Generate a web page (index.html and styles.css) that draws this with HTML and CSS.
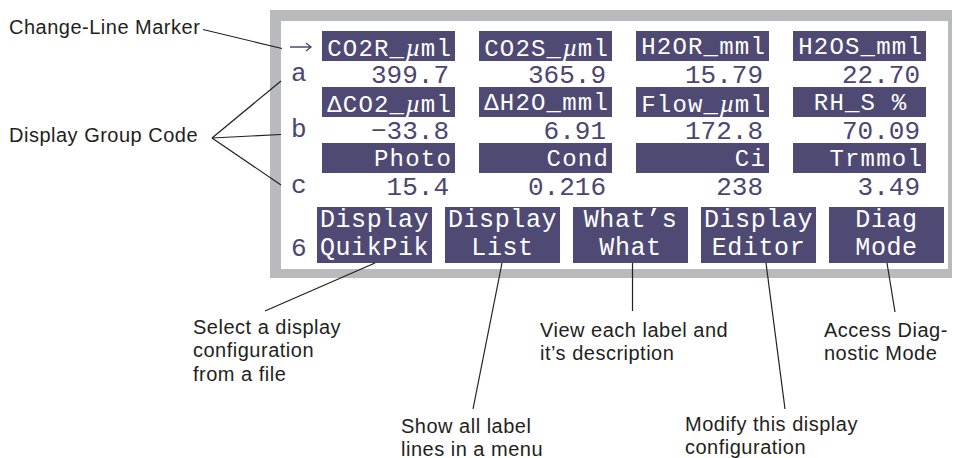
FILE: index.html
```html
<!DOCTYPE html>
<html lang="en">
<head>
<meta charset="utf-8">
<title>Display Overview</title>
<link rel="stylesheet" href="styles.css">
</head>
<body>
<div class="figure">

  <div class="screen">
    <div class="grid">
      <div class="code"><svg class="marker" width="24" height="12" viewBox="0 0 24 12"><path d="M1 6H22M17 2L22 6L17 10"/></svg></div>
      <div class="cell"><span class="label">CO2R_<span class="mu">µ</span>ml</span></div>
      <div class="cell"><span class="label">CO2S_<span class="mu">µ</span>ml</span></div>
      <div class="cell"><span class="label">H2OR_mml</span></div>
      <div class="cell"><span class="label">H2OS_mml</span></div>

      <div class="code">a</div>
      <div class="cell"><span class="value">399.7</span></div>
      <div class="cell"><span class="value">365.9</span></div>
      <div class="cell"><span class="value">15.79</span></div>
      <div class="cell"><span class="value">22.70</span></div>

      <div class="code"></div>
      <div class="cell"><span class="label">ΔCO2_<span class="mu">µ</span>ml</span></div>
      <div class="cell"><span class="label">ΔH2O_mml</span></div>
      <div class="cell"><span class="label">Flow_<span class="mu">µ</span>ml</span></div>
      <div class="cell"><span class="label">RH_S % </span></div>

      <div class="code">b</div>
      <div class="cell"><span class="value">−33.8</span></div>
      <div class="cell"><span class="value">6.91</span></div>
      <div class="cell"><span class="value">172.8</span></div>
      <div class="cell"><span class="value">70.09</span></div>

      <div class="code"></div>
      <div class="cell"><span class="label">Photo</span></div>
      <div class="cell"><span class="label">Cond</span></div>
      <div class="cell"><span class="label">Ci</span></div>
      <div class="cell"><span class="label">Trmmol</span></div>

      <div class="code">c</div>
      <div class="cell"><span class="value">15.4</span></div>
      <div class="cell"><span class="value">0.216</span></div>
      <div class="cell"><span class="value">238</span></div>
      <div class="cell"><span class="value">3.49</span></div>
    </div>

    <div class="keys">
      <span class="level">6</span>
      <div class="softkeys">
        <div class="key">Display<br>QuikPik</div>
        <div class="key">Display<br>List</div>
        <div class="key">What’s<br>What</div>
        <div class="key">Display<br>Editor</div>
        <div class="key">Diag<br>Mode</div>
      </div>
    </div>
  </div>

  <!-- callouts -->
  <div class="note n-marker">Change-Line Marker</div>
  <div class="note n-group">Display Group Code</div>
  <div class="note n-quik">Select a display<br>configuration<br>from a file</div>
  <div class="note n-list">Show all label<br>lines in a menu</div>
  <div class="note n-what">View each label and<br>it’s description</div>
  <div class="note n-edit">Modify this display<br>configuration</div>
  <div class="note n-diag">Access Diag-<br>nostic Mode</div>

  <svg class="leaders" width="954" height="458" viewBox="0 0 954 458">
    <line x1="203" y1="29.5" x2="282" y2="48.5"/>
    <line x1="212" y1="138" x2="281" y2="81"/>
    <line x1="212" y1="138" x2="281" y2="134.5"/>
    <line x1="212" y1="138" x2="281" y2="185"/>
    <line x1="375" y1="263" x2="265" y2="311"/>
    <line x1="502" y1="263" x2="473" y2="409"/>
    <line x1="632.5" y1="263" x2="632.5" y2="311"/>
    <line x1="766" y1="263" x2="785" y2="409"/>
    <line x1="887" y1="263" x2="895" y2="312"/>
  </svg>
</div>
</body>
</html>
```

FILE: styles.css
```css
body { margin: 0; background: #fff; }

.figure {
    position: relative;
    width: 954px;
    height: 458px;
    overflow: hidden;
    font-family: "Liberation Sans", Arial, sans-serif;
}

/* instrument screen */
.screen {
    box-sizing: border-box;
    width: 682px;
    height: 268px;
    margin: 10px 0 0 270px;
    padding-top: 10px;
    background: #fff;
    border-style: solid;
    border-color: #b9babd;
    border-width: 11px 4px 9px 11px;
    font-family: "Liberation Mono", "Courier New", monospace;
    color: #4b4571;
}

.grid {
    display: grid;
    grid-template-columns: 41px repeat(4, 157px);
    grid-template-rows: repeat(3, 30px 26px);
}

.code {
    padding-left: 10px;
    font-size: 26px;
    line-height: 30px;
    display: flex;
    align-items: center;
}
.code .marker { margin-left: -2px; margin-top: 1px; }
.marker path { stroke: #4f4a74; stroke-width: 1.4; fill: none; }

.cell { width: 133px; }

.label {
    display: block;
    box-sizing: border-box;
    height: 30px;
    padding: 3px 3px 0 0;
    background: #4f4a74;
    color: #fff;
    font-size: 24px;
    letter-spacing: 1.2px;
    line-height: 27px;
    text-align: right;
    white-space: pre;
}
.mu {
    display: inline-block;
    width: 15.6px;
    font-family: "Liberation Serif", "Times New Roman", serif;
    font-style: italic;
    font-size: 26px;
    letter-spacing: 0;
    text-align: center;
}

.value {
    display: block;
    height: 26px;
    padding-right: 6px;
    font-size: 26px;
    line-height: 30px;
    text-align: right;
}

/* soft keys */
.keys {
    display: flex;
    align-items: flex-end;
    margin-top: 8px;
    padding-left: 10px;
}
.level {
    width: 16px;
    margin: 0 10px 0 0;
    font-size: 26px;
    line-height: 28px;
}
.softkeys { display: flex; gap: 13px; }
.key {
    box-sizing: border-box;
    width: 115px;
    height: 56px;
    background: #4f4a74;
    color: #fff;
    font-size: 25px;
    letter-spacing: 0.6px;
    line-height: 28px;
    text-align: center;
    white-space: nowrap;
}

/* callout text and leader lines */
.note {
    position: absolute;
    color: #231f20;
    font-size: 20px;
    letter-spacing: 0.5px;
    line-height: 23.5px;
    white-space: nowrap;
}
.n-marker { left: 9px; top: 15.6px; }
.n-group { left: 9px; top: 123.6px; }
.n-quik { left: 193px; top: 315.6px; }
.n-list { left: 401px; top: 414.6px; }
.n-what { left: 540px; top: 318.6px; }
.n-edit { left: 685px; top: 412.6px; }
.n-diag { left: 824px; top: 318.6px; }

.leaders {
    position: absolute;
    left: 0;
    top: 0;
    pointer-events: none;
}
.leaders line { stroke: #231f20; stroke-width: 1.2; }
```
